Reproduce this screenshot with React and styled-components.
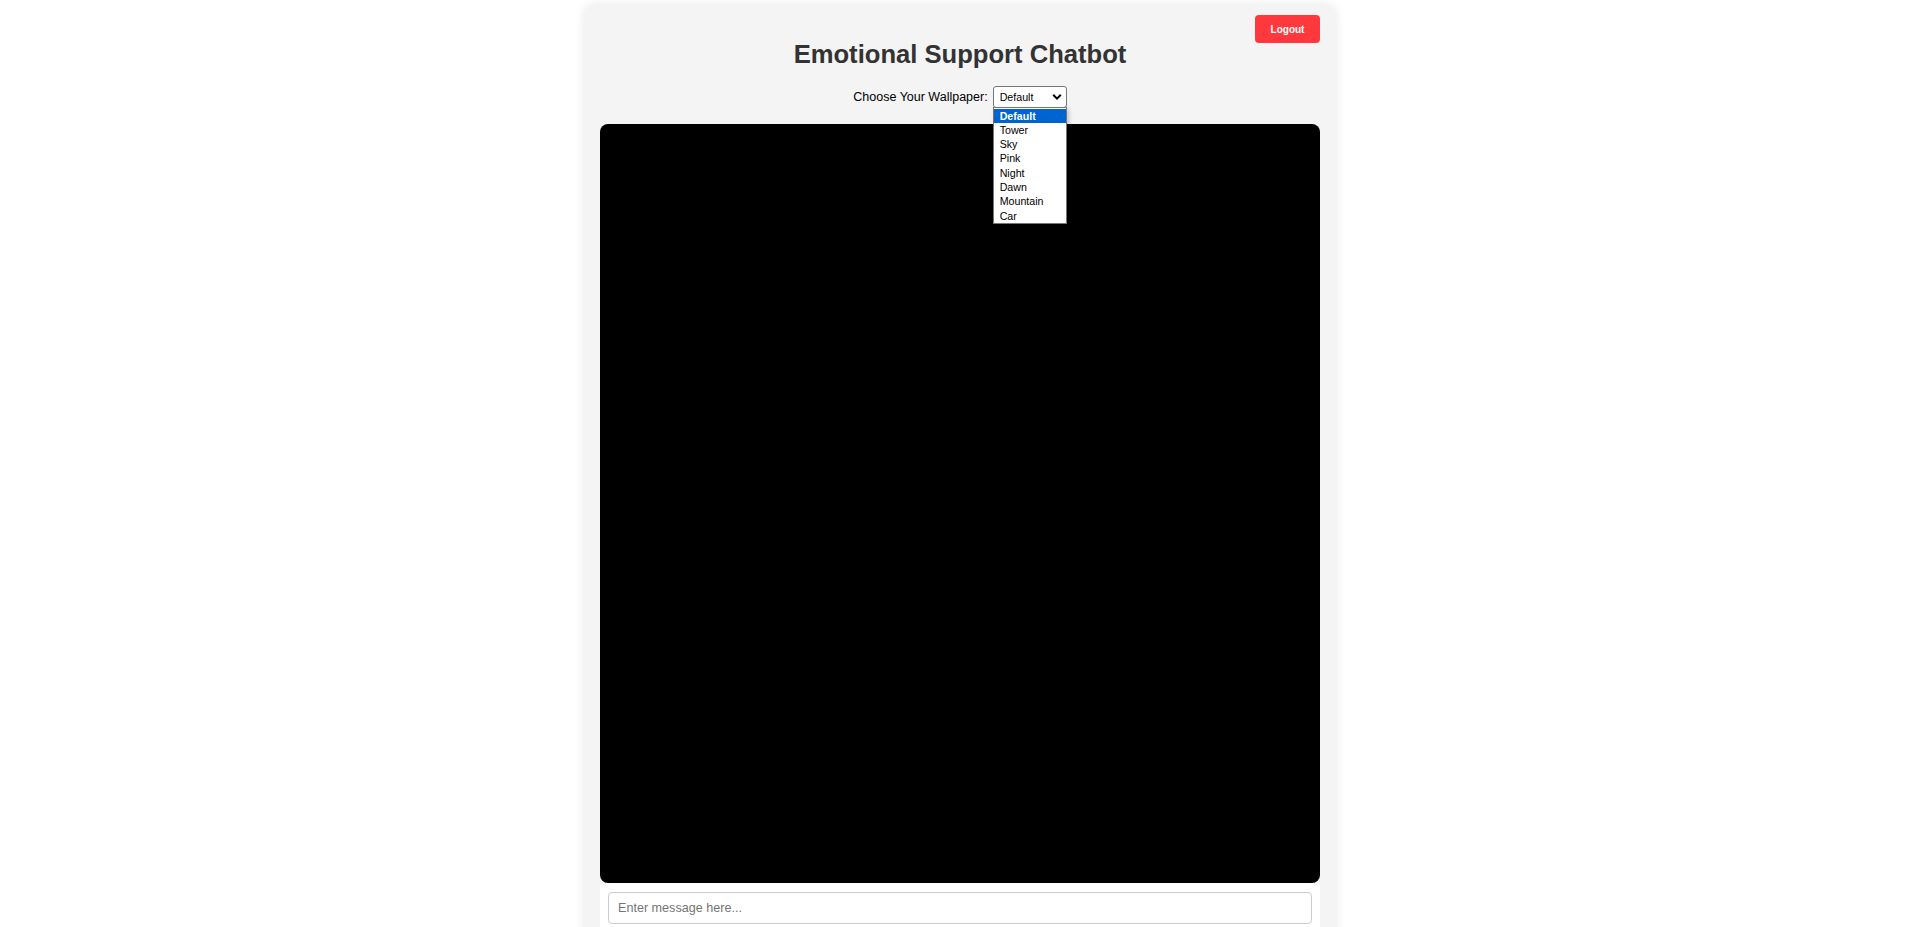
import React from "react";
import styled, { createGlobalStyle } from "styled-components";

const GlobalStyle = createGlobalStyle`
  html, body {
    margin: 0;
    padding: 0;
    background: #ffffff;
    font-family: Arial, "Liberation Sans", Helvetica, sans-serif;
    overflow: hidden;
  }
`;

const Page = styled.div`
  display: flex;
  justify-content: center;
  padding-top: 5px;
`;

const Container = styled.div`
  position: relative;
  width: 720px;
  padding: 35px 16px 16px;
  background: #f4f4f4;
  border-radius: 10px;
  box-shadow: 0 0 10px rgba(0, 0, 0, 0.1);
  display: flex;
  flex-direction: column;
`;

const LogoutButton = styled.button`
  position: absolute;
  top: 10px;
  right: 16px;
  width: 65px;
  height: 28px;
  border: none;
  border-radius: 4px;
  background: #ff383e;
  color: #ffffff;
  font-family: Arial, "Liberation Sans", sans-serif;
  font-weight: bold;
  font-size: 10px;
  cursor: pointer;
`;

const Title = styled.h1`
  margin: 0 0 17px;
  text-align: center;
  font-size: 25.6px;
  font-weight: bold;
  color: #333333;
  line-height: 28.6px;
`;

const WallpaperRow = styled.div`
  display: flex;
  justify-content: center;
  align-items: center;
  gap: 5px;
  height: 22px;
  margin-bottom: 16px;
`;

const Label = styled.label`
  font-size: 12.5px;
  color: #000000;
`;

const SelectWrap = styled.div`
  position: relative;
  width: 74px;
  height: 22px;
`;

const Select = styled.select`
  appearance: none;
  -webkit-appearance: none;
  width: 74px;
  height: 22px;
  box-sizing: border-box;
  border: 1px solid #767676;
  border-radius: 3px;
  background: #ffffff;
  font-family: Arial, "Liberation Sans", sans-serif;
  font-size: 10.67px;
  color: #000000;
  padding: 0 0 0 6px;
  outline: none;
`;

const Chevron = styled.svg`
  position: absolute;
  right: 5px;
  top: 7px;
  width: 10px;
  height: 8px;
  pointer-events: none;
`;

const OptionList = styled.ul`
  position: absolute;
  top: 21px;
  left: 0;
  width: 74px;
  box-sizing: border-box;
  margin: 0;
  padding: 1px 0 0;
  list-style: none;
  background: #ffffff;
  border: 1px solid #767676;
  box-shadow: 2px 2px 4px rgba(0, 0, 0, 0.2);
  z-index: 10;
`;

const OptionItem = styled.li`
  height: 14.3px;
  line-height: 14.3px;
  padding-left: 6px;
  font-size: 10.67px;
  color: ${(p) => (p.$active ? "#ffffff" : "#000000")};
  background: ${(p) => (p.$active ? "#0064d0" : "transparent")};
  font-weight: ${(p) => (p.$active ? "bold" : "normal")};
`;

const ChatArea = styled.div`
  height: 759px;
  background: #000000;
  border-radius: 8px;
`;

const InputBar = styled.div`
  background: #ffffff;
  border-radius: 4px;
  padding: 9px 8px 8px;
`;

const MessageInput = styled.input`
  width: 100%;
  height: 32px;
  box-sizing: border-box;
  border: 1px solid #cccccc;
  border-radius: 4px;
  padding: 0 9px;
  font-family: Arial, "Liberation Sans", sans-serif;
  font-size: 12.6px;
  color: #000;
  outline: none;
  &::placeholder {
    color: #757575;
  }
`;

const options = ["Default", "Tower", "Sky", "Pink", "Night", "Dawn", "Mountain", "Car"];

export default function App() {
  return (
    <>
      <GlobalStyle />
      <Page>
        <Container>
          <LogoutButton>Logout</LogoutButton>
          <Title>Emotional Support Chatbot</Title>
          <WallpaperRow>
            <Label htmlFor="wallpaper">Choose Your Wallpaper:</Label>
            <SelectWrap>
              <Select id="wallpaper" defaultValue="Default">
                {options.map((o) => (
                  <option key={o}>{o}</option>
                ))}
              </Select>
              <Chevron viewBox="0 0 10 8">
                <path d="M1.2 1.8 L5 5.6 L8.8 1.8" fill="none" stroke="#000" strokeWidth="2" />
              </Chevron>
              <OptionList>
                {options.map((o, i) => (
                  <OptionItem key={o} $active={i === 0}>
                    {o}
                  </OptionItem>
                ))}
              </OptionList>
            </SelectWrap>
          </WallpaperRow>
          <ChatArea />
          <InputBar>
            <MessageInput placeholder="Enter message here..." />
          </InputBar>
        </Container>
      </Page>
    </>
  );
}
